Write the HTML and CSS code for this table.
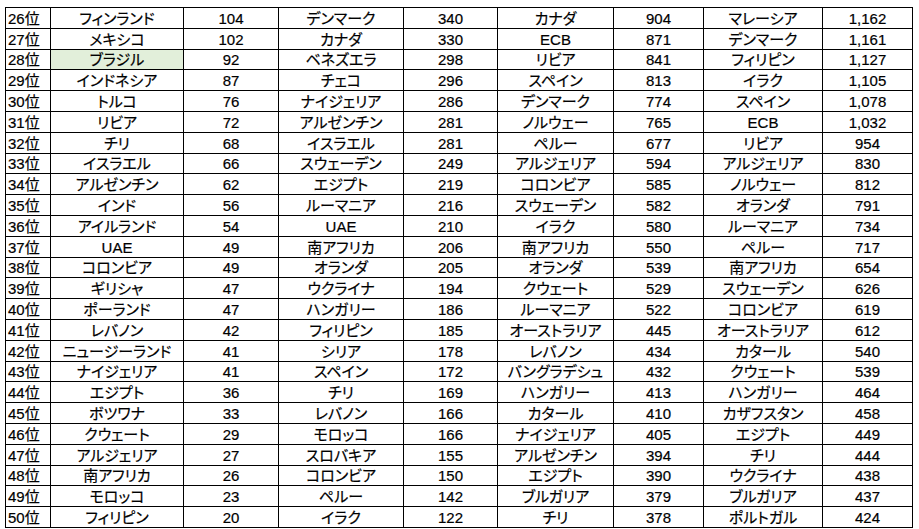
FILE: index.html
```html
<!DOCTYPE html>
<html lang="ja">
<head>
<meta charset="utf-8">
<title>ランキング</title>
<link rel="stylesheet" href="styles.css">
</head>
<body>
<div class="sheet">
<div class="c r">26位</div><div class="c">フィンランド</div><div class="c">104</div><div class="c">デンマーク</div><div class="c">340</div><div class="c">カナダ</div><div class="c">904</div><div class="c">マレーシア</div><div class="c">1,162</div>
<div class="c r">27位</div><div class="c">メキシコ</div><div class="c">102</div><div class="c">カナダ</div><div class="c">330</div><div class="c">ECB</div><div class="c">871</div><div class="c">デンマーク</div><div class="c">1,161</div>
<div class="c r">28位</div><div class="c hl">ブラジル</div><div class="c">92</div><div class="c">ベネズエラ</div><div class="c">298</div><div class="c">リビア</div><div class="c">841</div><div class="c">フィリピン</div><div class="c">1,127</div>
<div class="c r">29位</div><div class="c">インドネシア</div><div class="c">87</div><div class="c">チェコ</div><div class="c">296</div><div class="c">スペイン</div><div class="c">813</div><div class="c">イラク</div><div class="c">1,105</div>
<div class="c r">30位</div><div class="c">トルコ</div><div class="c">76</div><div class="c">ナイジェリア</div><div class="c">286</div><div class="c">デンマーク</div><div class="c">774</div><div class="c">スペイン</div><div class="c">1,078</div>
<div class="c r">31位</div><div class="c">リビア</div><div class="c">72</div><div class="c">アルゼンチン</div><div class="c">281</div><div class="c">ノルウェー</div><div class="c">765</div><div class="c">ECB</div><div class="c">1,032</div>
<div class="c r">32位</div><div class="c">チリ</div><div class="c">68</div><div class="c">イスラエル</div><div class="c">281</div><div class="c">ペルー</div><div class="c">677</div><div class="c">リビア</div><div class="c">954</div>
<div class="c r">33位</div><div class="c">イスラエル</div><div class="c">66</div><div class="c">スウェーデン</div><div class="c">249</div><div class="c">アルジェリア</div><div class="c">594</div><div class="c">アルジェリア</div><div class="c">830</div>
<div class="c r">34位</div><div class="c">アルゼンチン</div><div class="c">62</div><div class="c">エジプト</div><div class="c">219</div><div class="c">コロンビア</div><div class="c">585</div><div class="c">ノルウェー</div><div class="c">812</div>
<div class="c r">35位</div><div class="c">インド</div><div class="c">56</div><div class="c">ルーマニア</div><div class="c">216</div><div class="c">スウェーデン</div><div class="c">582</div><div class="c">オランダ</div><div class="c">791</div>
<div class="c r">36位</div><div class="c">アイルランド</div><div class="c">54</div><div class="c">UAE</div><div class="c">210</div><div class="c">イラク</div><div class="c">580</div><div class="c">ルーマニア</div><div class="c">734</div>
<div class="c r">37位</div><div class="c">UAE</div><div class="c">49</div><div class="c">南アフリカ</div><div class="c">206</div><div class="c">南アフリカ</div><div class="c">550</div><div class="c">ペルー</div><div class="c">717</div>
<div class="c r">38位</div><div class="c">コロンビア</div><div class="c">49</div><div class="c">オランダ</div><div class="c">205</div><div class="c">オランダ</div><div class="c">539</div><div class="c">南アフリカ</div><div class="c">654</div>
<div class="c r">39位</div><div class="c">ギリシャ</div><div class="c">47</div><div class="c">ウクライナ</div><div class="c">194</div><div class="c">クウェート</div><div class="c">529</div><div class="c">スウェーデン</div><div class="c">626</div>
<div class="c r">40位</div><div class="c">ポーランド</div><div class="c">47</div><div class="c">ハンガリー</div><div class="c">186</div><div class="c">ルーマニア</div><div class="c">522</div><div class="c">コロンビア</div><div class="c">619</div>
<div class="c r">41位</div><div class="c">レバノン</div><div class="c">42</div><div class="c">フィリピン</div><div class="c">185</div><div class="c">オーストラリア</div><div class="c">445</div><div class="c">オーストラリア</div><div class="c">612</div>
<div class="c r">42位</div><div class="c">ニュージーランド</div><div class="c">41</div><div class="c">シリア</div><div class="c">178</div><div class="c">レバノン</div><div class="c">434</div><div class="c">カタール</div><div class="c">540</div>
<div class="c r">43位</div><div class="c">ナイジェリア</div><div class="c">41</div><div class="c">スペイン</div><div class="c">172</div><div class="c">バングラデシュ</div><div class="c">432</div><div class="c">クウェート</div><div class="c">539</div>
<div class="c r">44位</div><div class="c">エジプト</div><div class="c">36</div><div class="c">チリ</div><div class="c">169</div><div class="c">ハンガリー</div><div class="c">413</div><div class="c">ハンガリー</div><div class="c">464</div>
<div class="c r">45位</div><div class="c">ボツワナ</div><div class="c">33</div><div class="c">レバノン</div><div class="c">166</div><div class="c">カタール</div><div class="c">410</div><div class="c">カザフスタン</div><div class="c">458</div>
<div class="c r">46位</div><div class="c">クウェート</div><div class="c">29</div><div class="c">モロッコ</div><div class="c">166</div><div class="c">ナイジェリア</div><div class="c">405</div><div class="c">エジプト</div><div class="c">449</div>
<div class="c r">47位</div><div class="c">アルジェリア</div><div class="c">27</div><div class="c">スロバキア</div><div class="c">155</div><div class="c">アルゼンチン</div><div class="c">394</div><div class="c">チリ</div><div class="c">444</div>
<div class="c r">48位</div><div class="c">南アフリカ</div><div class="c">26</div><div class="c">コロンビア</div><div class="c">150</div><div class="c">エジプト</div><div class="c">390</div><div class="c">ウクライナ</div><div class="c">438</div>
<div class="c r">49位</div><div class="c">モロッコ</div><div class="c">23</div><div class="c">ペルー</div><div class="c">142</div><div class="c">ブルガリア</div><div class="c">379</div><div class="c">ブルガリア</div><div class="c">437</div>
<div class="c r">50位</div><div class="c">フィリピン</div><div class="c">20</div><div class="c">イラク</div><div class="c">122</div><div class="c">チリ</div><div class="c">378</div><div class="c">ポルトガル</div><div class="c">424</div>
</div>
</body>
</html>
```

FILE: styles.css
```css
html, body {
  margin: 0;
  padding: 0;
  background: #ffffff;
}

body {
  font-family: "Liberation Sans", "Noto Sans CJK JP", sans-serif;
  font-size: 15px;
  color: #000000;
}

.sheet {
  margin: 7px 0 0 5px;
  width: 908px;
  display: grid;
  grid-template-columns: 45px 133px 95px 125px 94px 116px 90px 119px 90px;
  grid-auto-rows: 20.8px;
  border-top: 1px solid #000;
  border-left: 1px solid #000;
  box-sizing: border-box;
}

.c {
  box-sizing: border-box;
  border-right: 1px solid #000;
  border-bottom: 1px solid #000;
  display: flex;
  align-items: center;
  justify-content: center;
  white-space: nowrap;
  overflow: hidden;
  line-height: 1;
  font-feature-settings: "palt";
  -webkit-text-stroke: 0.2px #000;
  padding-top: 1px;
}

.c.r {
  justify-content: flex-start;
  padding-left: 2px;
}

.c.hl {
  background: #e2efda;
}
```
